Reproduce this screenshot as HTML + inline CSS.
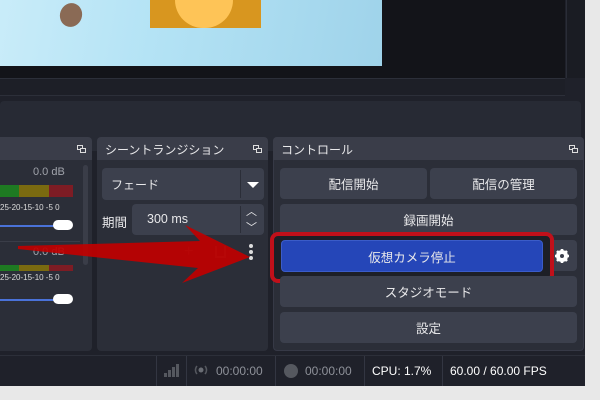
<!DOCTYPE html><html><head><meta charset="utf-8"><style>
*{margin:0;padding:0;box-sizing:border-box}
body{width:600px;height:400px;overflow:hidden;background:#e8e8e8;position:relative;font-family:"Liberation Sans","Noto Sans CJK JP",sans-serif;color:#e8e8ea;font-size:12px}
.a{position:absolute}
.btn{position:absolute;background:#3c404d;border-radius:4px;display:flex;align-items:center;justify-content:center;font-size:12.5px}
.hd{position:absolute;font-size:12px;color:#e8e8ea}
.ic{position:absolute;width:9px;height:8px}
</style></head><body>
<div class="a" style="left:0;top:0;width:585px;height:386px;background:#1f212a"></div>
<div class="a" style="left:0;top:0;width:565px;height:78px;background:#131419"></div>
<div class="a" style="left:0;top:0;width:382px;height:66px;background:linear-gradient(100deg,#c9ecf9,#b4e3f5 40%,#9fd3ea)"></div>
<div class="a" style="left:150px;top:0;width:111px;height:28px;background:#d8961f"></div>
<div class="a" style="left:175px;top:0;width:58px;height:28px;background:#fec457;border-radius:0 0 30px 30px"></div>
<div class="a" style="left:60px;top:3px;width:22px;height:24px;background:#8a6a55;border-radius:50%;transform:rotate(20deg)"></div>
<div class="a" style="left:566px;top:0;width:19px;height:78px;border-left:1px solid #2a2d37;background:#1a1c23"></div>
<div class="a" style="left:0;top:78px;width:565px;height:18px;border-top:1px solid #2c2f39;border-bottom:1px solid #2c2f39;background:#1d1f27"></div>
<div class="a" style="left:0;top:101px;width:581px;height:50px;background:#272a34;border-radius:4px"></div>
<!-- left dock -->
<div class="a" style="left:0;top:137px;width:92px;height:214px;background:#2b2e38;border-radius:0 4px 4px 0"></div>
<div class="a" style="left:0;top:137px;width:92px;height:23px;background:#3a3d49;border-radius:0 4px 0 0"></div>
<svg class="ic" style="left:77px;top:145px" viewBox="0 0 9 8"><rect x=".5" y=".5" width="5" height="4" fill="none" stroke="#ddd"/><rect x="3.5" y="3.5" width="5" height="4" fill="#3a3d49" stroke="#ddd"/></svg>
<div class="a" style="left:33px;top:166px;font-size:11px;color:#a0a3ab">0.0 dB</div>
<div class="a" style="left:0;top:185px;width:19px;height:12px;background:#1e7a22"></div><div class="a" style="left:19px;top:185px;width:30px;height:12px;background:#7a6a10"></div><div class="a" style="left:49px;top:185px;width:24px;height:12px;background:#7d1c24"></div>
<div class="a" style="left:0;top:203px;font-size:8px;color:#ddd">25-20-15-10 -5 0</div>
<div class="a" style="left:0;top:225px;width:60px;height:2px;background:#4a72d8"></div>
<div class="a" style="left:53px;top:220px;width:20px;height:10px;background:#fff;border-radius:5px"></div>
<div class="a" style="left:0;top:241px;width:80px;height:1px;background:#3a3d48"></div>
<div class="a" style="left:33px;top:246px;font-size:11px;color:#a0a3ab">0.0 dB</div>
<div class="a" style="left:0;top:265px;width:19px;height:6px;background:#1e7a22"></div><div class="a" style="left:19px;top:265px;width:30px;height:6px;background:#7a6a10"></div><div class="a" style="left:49px;top:265px;width:24px;height:6px;background:#7d1c24"></div>
<div class="a" style="left:0;top:273px;font-size:8px;color:#ddd">25-20-15-10 -5 0</div>
<div class="a" style="left:0;top:299px;width:60px;height:2px;background:#4a72d8"></div>
<div class="a" style="left:53px;top:294px;width:20px;height:10px;background:#fff;border-radius:5px"></div>
<div class="a" style="left:83px;top:165px;width:5px;height:100px;background:#3a3d48;border-radius:3px"></div>
<!-- transition dock -->
<div class="a" style="left:97px;top:137px;width:171px;height:214px;background:#2b2e38;border-radius:4px"></div>
<div class="a" style="left:97px;top:137px;width:171px;height:23px;background:#3a3d49;border-radius:4px 4px 0 0"></div>
<div class="hd" style="left:105px;top:141px">シーントランジション</div>
<svg class="ic" style="left:253px;top:145px" viewBox="0 0 9 8"><rect x=".5" y=".5" width="5" height="4" fill="none" stroke="#ddd"/><rect x="3.5" y="3.5" width="5" height="4" fill="#3a3d49" stroke="#ddd"/></svg>
<div class="a" style="left:102px;top:168px;width:162px;height:32px;background:#3c404d;border-radius:4px"></div>
<div class="a" style="left:111px;top:176px;font-size:12px">フェード</div>
<div class="a" style="left:240px;top:170px;width:1px;height:28px;background:#2b2e38"></div>
<div class="a" style="left:247px;top:182px;border-left:6px solid transparent;border-right:6px solid transparent;border-top:6px solid #fff"></div>
<div class="a" style="left:102px;top:212px;font-size:12.5px">期間</div>
<div class="a" style="left:132px;top:204px;width:132px;height:31px;background:#3c404d;border-radius:4px"></div>
<div class="a" style="left:147px;top:212px;font-size:12.5px">300 ms</div>
<div class="a" style="left:240px;top:206px;width:1px;height:27px;background:#2b2e38"></div>
<div class="a" style="left:246px;top:203px;font-size:11px">︿</div>
<div class="a" style="left:246px;top:219px;font-size:11px">﹀</div>
<div class="a" style="left:184px;top:243px;font-size:16px;color:#55585f">+</div>
<div class="a" style="left:215px;top:246px;width:11px;height:12px;border:2px solid #55585f;border-top:none"></div>
<div class="a" style="left:249px;top:244px;width:4px;height:4px;border-radius:2px;background:#ddd"></div>
<div class="a" style="left:249px;top:250px;width:4px;height:4px;border-radius:2px;background:#ddd"></div>
<div class="a" style="left:249px;top:256px;width:4px;height:4px;border-radius:2px;background:#ddd"></div>
<!-- controls -->
<div class="a" style="left:273px;top:137px;width:311px;height:214px;background:#2b2e38;border-radius:4px;border:1px solid #363946"></div>
<div class="a" style="left:273px;top:137px;width:311px;height:23px;background:#3a3d49;border-radius:4px 4px 0 0"></div>
<div class="hd" style="left:281px;top:141px">コントロール</div>
<svg class="ic" style="left:569px;top:145px" viewBox="0 0 9 8"><rect x=".5" y=".5" width="5" height="4" fill="none" stroke="#ddd"/><rect x="3.5" y="3.5" width="5" height="4" fill="#3a3d49" stroke="#ddd"/></svg>
<div class="btn" style="left:280px;top:168px;width:147px;height:31px">配信開始</div>
<div class="btn" style="left:430px;top:168px;width:147px;height:31px">配信の管理</div>
<div class="btn" style="left:280px;top:204px;width:297px;height:31px">録画開始</div>
<div class="btn" style="left:546px;top:240px;width:31px;height:31px"><svg width="14" height="14" viewBox="0 0 14 14"><circle cx="7" cy="7" r="4.5" fill="none" stroke="#fff" stroke-width="3"/><g stroke="#fff" stroke-width="2.6"><line x1="7" y1="0" x2="7" y2="14"/><line x1="0" y1="7" x2="14" y2="7"/><line x1="2" y1="2" x2="12" y2="12"/><line x1="12" y1="2" x2="2" y2="12"/></g><circle cx="7" cy="7" r="2" fill="#3c404d"/></svg></div>
<div class="a" style="left:270px;top:232px;width:284px;height:51px;border:4px solid #c0101a;border-radius:8px;background:#1d1f26"></div>
<div class="btn" style="left:281px;top:240px;width:262px;height:32px;background:#2546b8;border:1px solid #3b5cc8">仮想カメラ停止</div>
<div class="btn" style="left:280px;top:276px;width:297px;height:31px">スタジオモード</div>
<div class="btn" style="left:280px;top:312px;width:297px;height:31px">設定</div>
<!-- status bar -->
<div class="a" style="left:0;top:355px;width:585px;height:31px;background:#1f212a;border-top:1px solid #2c2f39"></div>
<div class="a" style="left:156px;top:356px;width:1px;height:30px;background:#333642"></div>
<div class="a" style="left:186px;top:356px;width:1px;height:30px;background:#333642"></div>
<div class="a" style="left:275px;top:356px;width:1px;height:30px;background:#333642"></div>
<div class="a" style="left:364px;top:356px;width:1px;height:30px;background:#333642"></div>
<div class="a" style="left:442px;top:356px;width:1px;height:30px;background:#333642"></div>
<svg class="a" style="left:163px;top:362px" width="16" height="16"><g fill="#55585f"><rect x="1" y="11" width="3" height="4"/><rect x="5" y="8" width="3" height="7"/><rect x="9" y="5" width="3" height="10"/><rect x="13" y="2" width="3" height="13"/></g></svg>
<svg class="a" style="left:193px;top:363px" width="16" height="14"><circle cx="8" cy="7" r="2.5" fill="#6a6d74"/><path d="M4 3a6 6 0 0 0 0 8M12 3a6 6 0 0 1 0 8" stroke="#55585f" stroke-width="1.5" fill="none"/></svg>
<div class="a" style="left:216px;top:364px;font-size:12px;color:#8e9199">00:00:00</div>
<div class="a" style="left:284px;top:364px;width:14px;height:14px;border-radius:7px;background:#55585f"></div>
<div class="a" style="left:305px;top:364px;font-size:12px;color:#8e9199">00:00:00</div>
<div class="a" style="left:372px;top:364px;font-size:12px;color:#fff">CPU: 1.7%</div>
<div class="a" style="left:450px;top:364px;font-size:12px;color:#fff">60.00 / 60.00 FPS</div>
<!-- arrow -->
<svg class="a" style="left:0;top:0" width="600" height="400"><polygon points="18,246 200,241 185,225 250,257 182,283 198,268 18,249" fill="#c00000" fill-opacity="0.92"/></svg>
</body></html>
